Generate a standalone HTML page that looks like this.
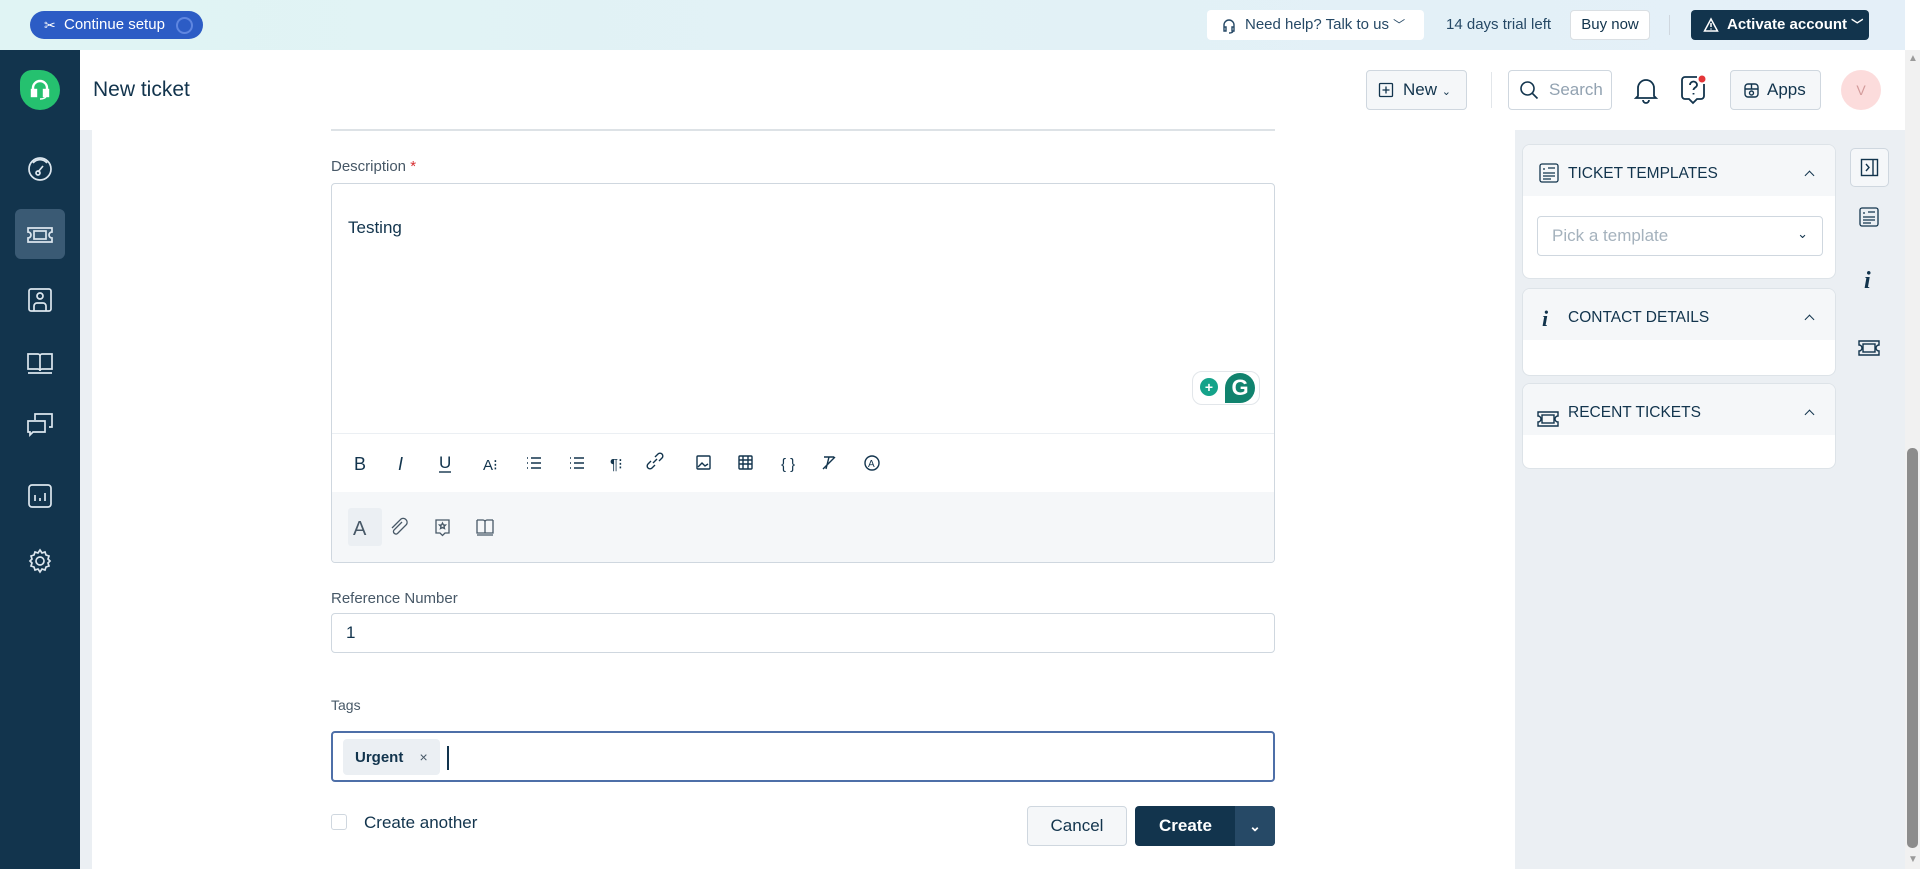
<!DOCTYPE html>
<html><head><meta charset="utf-8"><style>
*{box-sizing:border-box;margin:0;padding:0}
body{width:1920px;height:869px;overflow:hidden;font-family:"Liberation Sans",sans-serif;background:#fff;position:relative;color:#12344d}
.abs{position:absolute}
.top{left:0;top:0;width:1905px;height:50px;background:linear-gradient(90deg,#e0f4f4,#e4eff8)}
.cs{left:30px;top:11px;width:173px;height:28px;border-radius:14px;background:#2c5cc5;color:#fff;font-size:15px;line-height:28px;padding-left:34px}
.cs .ring{position:absolute;right:10px;top:6px;width:17px;height:17px;border-radius:50%;border:2.5px solid #5f86e0}
.help{left:1207px;top:10px;width:217px;height:30px;background:#fff;border-radius:4px;font-size:15px;line-height:30px;padding-left:38px;color:#264966}
.trial{left:1446px;top:10px;font-size:15px;line-height:30px;color:#264966}
.buy{left:1570px;top:10px;width:80px;height:30px;background:#fff;border:1px solid #dadfe3;border-radius:4px;font-size:15px;line-height:28px;text-align:center;color:#12344d}
.sep1{left:1669px;top:15px;width:1px;height:20px;background:#cfd7df}
.act{left:1691px;top:10px;width:178px;height:30px;background:#12344d;border-radius:4px;color:#fff;font-weight:bold;font-size:15px;line-height:30px;padding-left:36px}
.side{left:0;top:50px;width:80px;height:819px;background:#12344d}
.logo{left:20px;top:70px;width:40px;height:40px;border-radius:12px 20px 20px 20px;background:#25c16f}
.sideitem{left:15px;width:50px;height:50px;border-radius:6px}
.hdr{left:80px;top:50px;width:1825px;height:80px;background:#fff}
.title{left:93px;top:78px;font-size:21px;color:#12344d}
.btn{background:#f5f7f9;border:1px solid #cfd7df;border-radius:4px}
.gut{left:80px;top:130px;width:12px;height:739px;background:#ebeff3}
.rp{left:1515px;top:130px;width:390px;height:739px;background:#ebeff3}
.sb{left:1905px;top:50px;width:15px;height:819px;background:#f1f1f1}
.card{left:1522px;width:314px;background:#fff;border:1px solid #dde3e8;border-radius:8px;overflow:hidden}
.card .h{height:51px;background:#f5f7f9;font-size:15.5px;line-height:57px;padding-left:45px;position:relative;color:#12344d}
.card .h:after{content:"";position:absolute;right:22px;top:27px;width:6px;height:6px;border-left:1.5px solid #12344d;border-top:1.5px solid #12344d;transform:rotate(45deg)}
.lbl{left:331px;font-size:14px;color:#475867}
.box{left:331px;width:944px;border:1px solid #cfd7df;border-radius:4px;background:#fff}
.tb svg{position:absolute;top:452px}
</style></head><body>
<div class="abs top"></div>
<div class="abs cs"><span class="abs" style="left:14px;top:0;font-size:14px">✂</span>Continue setup<div class="ring"></div></div>
<div class="abs help"><svg class="abs" style="left:14px;top:8px" width="16" height="16" viewBox="0 0 16 16" fill="none" stroke="#264966" stroke-width="1.4"><path d="M3 10V7a5 5 0 0110 0v3M3 9h2v4H3zM11 9h2v4h-2zM12 13c0 1.5-2 2-4 2"/></svg>Need help? Talk to us <span style="font-size:12px">﹀</span></div>
<div class="abs trial">14 days trial left</div>
<div class="abs buy">Buy now</div>
<div class="abs sep1"></div>
<div class="abs act"><svg class="abs" style="left:12px;top:7px" width="16" height="16" viewBox="0 0 16 16" fill="none" stroke="#fff" stroke-width="1.5"><path d="M8 2L1.5 14h13zM8 6v4M8 11.5v1"/></svg>Activate account <span style="font-size:12px">﹀</span></div>

<div class="abs side"></div>
<div class="abs logo"><svg class="abs" style="left:10px;top:9px" width="20" height="22" viewBox="0 0 20 22" fill="none" stroke="#fff" stroke-width="2.4"><path d="M3 13V9a7 7 0 0114 0v4"/><rect x="2" y="11" width="4" height="6" fill="#fff"/><rect x="14" y="11" width="4" height="6" fill="#fff"/><path d="M16 17c0 2-3 3-6 3" stroke-width="1.5"/></svg></div>
<div class="abs sideitem" style="top:209px;background:#3a5a74"></div>
<svg class="abs" style="left:0;top:130px" width="80" height="460" viewBox="0 0 80 460" fill="none" stroke="#dce6ee" stroke-width="1.7">
<circle cx="40" cy="39" r="11"/><path d="M33 33a9 9 0 0114 0M38 42l5-6"/><circle cx="38" cy="43" r="2"/>
<path d="M28 98h24v4a3 3 0 000 6v4H28v-4a3 3 0 000-6z"/><rect x="34" y="101" width="12" height="8"/>
<rect x="29" y="159" width="22" height="22" rx="2"/><circle cx="40" cy="166" r="3"/><path d="M34 181v-5a3 3 0 013-3h6a3 3 0 013 3v5"/>
<path d="M28 224h10a2 2 0 012 2v15a2 2 0 00-2-2H28zM52 224H42a2 2 0 00-2 2v15a2 2 0 012-2h10z"/><path d="M28 243h24"/>
<path d="M35 290v-6h17v13h-3"/><path d="M28 291h17v11H33l-3 3v-3h-2z"/>
<rect x="29" y="355" width="22" height="22" rx="3"/><path d="M35 371v-6M40 371v-3M45 371v-8"/>
<circle cx="40" cy="431" r="4"/><path d="M40 420l2 3 3-1 1 3 3 1-1 3 2 2-2 2 1 3-3 1-1 3-3-1-2 3-2-3-3 1-1-3-3-1 1-3-2-2 2-2-1-3 3-1 1-3 3 1z"/>
</svg>

<div class="abs hdr"></div>
<div class="abs title">New ticket</div>
<div class="abs btn" style="left:1366px;top:70px;width:101px;height:40px;font-size:17px;line-height:38px;padding-left:36px;color:#12344d"><svg class="abs" style="left:11px;top:11px" width="16" height="16" viewBox="0 0 16 16" fill="none" stroke="#12344d" stroke-width="1.3"><rect x="1.5" y="1.5" width="13" height="13" rx="1"/><path d="M8 4.5v7M4.5 8h7"/></svg>New <span style="font-size:11px">⌄</span></div>
<div class="abs" style="left:1491px;top:72px;width:1px;height:36px;background:#e2e6ea"></div>
<div class="abs" style="left:1508px;top:70px;width:104px;height:40px;border:1px solid #cfd7df;border-radius:4px;font-size:17px;line-height:38px;padding-left:40px;color:#92a2b1"><svg class="abs" style="left:10px;top:9px" width="20" height="20" viewBox="0 0 20 20" fill="none" stroke="#12344d" stroke-width="1.6"><circle cx="8.5" cy="8.5" r="6.5"/><path d="M13.5 13.5l5 5"/></svg>Search</div>
<svg class="abs" style="left:1633px;top:75px" width="26" height="30" viewBox="0 0 26 30" fill="none" stroke="#12344d" stroke-width="1.8"><path d="M5 21V13a8 8 0 0116 0v8l2 2H3zM10 25a3 3 0 006 0"/></svg>
<svg class="abs" style="left:1679px;top:73px" width="30" height="32" viewBox="0 0 30 32" fill="none" stroke="#12344d" stroke-width="1.8"><path d="M18 4H6a3 3 0 00-3 3v16a3 3 0 003 3h4l4 4 4-4h4a3 3 0 003-3V11"/><path d="M11 12a3.5 3.5 0 117 0c0 2.5-3.5 2.5-3.5 5M14.5 20v1.5"/><circle cx="23" cy="6" r="3.5" fill="#e43538" stroke="none"/></svg>
<div class="abs btn" style="left:1730px;top:70px;width:91px;height:40px;font-size:17px;line-height:38px;padding-left:36px;color:#12344d"><svg class="abs" style="left:12px;top:11px" width="17" height="17" viewBox="0 0 17 17" fill="none" stroke="#12344d" stroke-width="1.4"><rect x="2" y="2" width="13" height="13" rx="3"/><path d="M2 7h13M8.5 2v5"/><circle cx="8.5" cy="11" r="2"/></svg>Apps</div>
<div class="abs" style="left:1841px;top:70px;width:40px;height:40px;border-radius:50%;background:#fcdcdc;color:#d39b9b;font-size:14px;line-height:40px;text-align:center">V</div>

<div class="abs gut"></div>
<div class="abs" style="left:331px;top:129px;width:944px;height:2px;background:#dde2e6"></div>

<div class="abs lbl" style="top:158px;font-size:15px">Description <span style="color:#d72d30">*</span></div>
<div class="abs box" style="top:183px;height:380px;overflow:hidden">
 <div class="abs" style="left:16px;top:34px;font-size:17px;color:#12344d">Testing</div>
 <div class="abs" style="left:0;top:249px;width:944px;height:1px;background:#ebeff3"></div>
 <div class="abs" style="left:0;top:308px;width:944px;height:72px;background:#f5f7f9"></div>
 <div class="abs" style="left:16px;top:324px;width:34px;height:38px;background:#ebeff3;border-radius:3px"></div>
 <div class="abs" style="left:860px;top:187px;width:68px;height:34px;border:1px solid #e2e6ea;border-radius:10px 10px 10px 10px;background:#fff"></div>
 <div class="abs" style="left:868px;top:194px;width:18px;height:18px;border-radius:50%;background:#15a38a;color:#fff;font-size:14px;line-height:18px;text-align:center;font-weight:bold">+</div>
 <div class="abs" style="left:893px;top:189px;width:30px;height:30px;border-radius:50% 50% 50% 0;background:#11836e;color:#fff;font-size:22px;line-height:30px;text-align:center;font-weight:bold">G</div>
</div>
<div class="tb">
<svg width="900" height="30" style="left:350px;top:448px" viewBox="0 0 900 30" fill="none" stroke="#12344d" stroke-width="1.4" font-family="Liberation Sans">
<text x="4" y="22" font-size="18" fill="#12344d" stroke="none">B</text>
<text x="48" y="22" font-size="18" font-style="italic" fill="#12344d" stroke="none">I</text>
<text x="89" y="20" font-size="17" fill="#12344d" stroke="none">U</text><path d="M89 24h12"/>
<text x="133" y="22" font-size="15" fill="#12344d" stroke="none">A⁝</text>
<path d="M181 10h10M181 15h10M181 20h10M177 10h1M177 15h1M177 20h1"/>
<path d="M224 10h10M224 15h10M224 20h10M220 10h1M220 15h1M220 20h1"/>
<text x="260" y="21" font-size="15" fill="#12344d" stroke="none">¶⁝</text>
<path d="M305 17l-3 3a2.5 2.5 0 01-4-4l3-3M309 13l3-3a2.5 2.5 0 00-4-4l-3 3M303 15l4-4"/>
<rect x="347" y="8" width="13" height="13" rx="1"/><path d="M348 19l4-4 3 3 3-2"/>
<rect x="389" y="8" width="13" height="13" rx="1"/><path d="M389 12h13M389 16h13M393 8v13M398 8v13"/>
<text x="431" y="21" font-size="15" fill="#12344d" stroke="none">{ }</text>
<path d="M474 9h10M479 9l-3 12M473 21l12-12"/>
<circle cx="522" cy="15" r="7"/><text x="518" y="19" font-size="10" fill="#12344d" stroke="none">A</text>
</svg>
<svg width="200" height="34" style="left:350px;top:510px" viewBox="0 0 200 34" fill="none" stroke="#475867" stroke-width="1.3" font-family="Liberation Sans">
<text x="3" y="25" font-size="20" fill="#475867" stroke="none">A</text>
<path d="M52 12l-8 8a2.5 2.5 0 003.5 3.5l9-9a4 4 0 00-5.5-5.5l-9 9"/>
<path d="M86 10h13v13h-4l-2.5 2.5L90 23h-4z"/><path d="M92.5 13l1 2h2l-1.5 1.5.5 2-2-1-2 1 .5-2-1.5-1.5h2z"/>
<path d="M127 10h6a2 2 0 012 2v11M143 10h-6a2 2 0 00-2 2M127 10v13h16V10M127 25h16"/>
</svg>
</div>

<div class="abs lbl" style="top:590px;font-size:15px">Reference Number</div>
<div class="abs box" style="top:613px;height:40px;font-size:17px;line-height:38px;padding-left:14px;color:#12344d">1</div>

<div class="abs lbl" style="top:697px;font-size:14px">Tags</div>
<div class="abs box" style="top:731px;height:51px;border:2px solid #4e6fa8"></div>
<div class="abs" style="left:343px;top:739px;width:97px;height:36px;background:#ebeff3;border-radius:4px;font-size:15px;line-height:36px;padding-left:12px;font-weight:bold;color:#12344d">Urgent <span style="font-weight:normal;font-size:14px;margin-left:12px;color:#475867">×</span></div>
<div class="abs" style="left:447px;top:746px;width:2px;height:24px;background:#12344d"></div>

<div class="abs" style="left:331px;top:814px;width:16px;height:16px;border:1px solid #cfd7df;border-radius:3px"></div>
<div class="abs" style="left:364px;top:813px;font-size:17px;color:#12344d">Create another</div>
<div class="abs btn" style="left:1027px;top:806px;width:100px;height:40px;font-size:17px;line-height:38px;text-align:center;color:#12344d">Cancel</div>
<div class="abs" style="left:1135px;top:806px;width:140px;height:40px;border-radius:4px;background:#12344d;color:#fff;font-size:17px;font-weight:bold;line-height:40px;padding-left:24px">Create</div>
<div class="abs" style="left:1235px;top:806px;width:40px;height:40px;border-radius:0 4px 4px 0;background:#264966;color:#fff;font-size:14px;line-height:40px;text-align:center;font-weight:bold">⌄</div>

<div class="abs rp"></div>
<div class="abs card" style="top:144px;height:135px"><div class="h">TICKET TEMPLATES</div>
 <div class="abs" style="left:14px;top:71px;width:286px;height:40px;border:1px solid #cfd7df;border-radius:4px;font-size:17px;line-height:38px;padding-left:14px;color:#a5b2bd">Pick a template<span class="abs" style="right:14px;top:-2px;color:#12344d;font-size:13px">⌄</span></div>
</div>
<div class="abs card" style="top:288px;height:88px"><div class="h">CONTACT DETAILS</div></div>
<div class="abs card" style="top:383px;height:86px"><div class="h">RECENT TICKETS</div></div>
<svg class="abs" style="left:1538px;top:162px" width="24" height="24" viewBox="0 0 24 24" fill="none" stroke="#12344d" stroke-width="1.3"><rect x="2" y="2" width="18" height="18" rx="2"/><path d="M5 7h2M5 11h12M5 14h12M5 17h8M10 6h7"/></svg>
<div class="abs" style="left:1542px;top:306px;font-family:'Liberation Serif',serif;font-style:italic;font-weight:bold;font-size:22px;color:#12344d">i</div>
<svg class="abs" style="left:1536px;top:408px" width="24" height="22" viewBox="0 0 24 22" fill="none" stroke="#12344d" stroke-width="1.4"><path d="M2 4h20v4a3 3 0 000 6v4H2v-4a3 3 0 000-6z"/><rect x="6" y="7" width="12" height="8"/></svg>
<div class="abs" style="left:1850px;top:148px;width:39px;height:39px;border:1px solid #cfd7df;border-radius:5px;background:#f5f7f9"></div>
<svg class="abs" style="left:1860px;top:158px" width="19" height="19" viewBox="0 0 19 19" fill="none" stroke="#12344d" stroke-width="1.4"><rect x="1.5" y="1.5" width="16" height="16"/><path d="M13 1.5v16M6 6l3 3.5-3 3.5"/></svg>
<svg class="abs" style="left:1858px;top:206px" width="22" height="22" viewBox="0 0 22 22" fill="none" stroke="#12344d" stroke-width="1.3"><rect x="2" y="2" width="18" height="18" rx="2"/><path d="M5 7h2M5 11h12M5 14h12M5 17h8M10 6h7"/></svg>
<div class="abs" style="left:1864px;top:268px;font-family:'Liberation Serif',serif;font-style:italic;font-weight:bold;font-size:24px;color:#12344d">i</div>
<svg class="abs" style="left:1857px;top:337px" width="24" height="22" viewBox="0 0 24 22" fill="none" stroke="#12344d" stroke-width="1.4"><path d="M2 4h20v4a3 3 0 000 6v4H2v-4a3 3 0 000-6z"/><rect x="6" y="7" width="12" height="8"/></svg>

<div class="abs sb"></div>
<div class="abs" style="left:1907px;top:448px;width:11px;height:400px;border-radius:5px;background:#8c8c8c"></div>
<div class="abs" style="left:1908px;top:53px;font-size:10px;color:#9a9a9a">▲</div>
<div class="abs" style="left:1908px;top:854px;font-size:10px;color:#9a9a9a">▼</div>
</body></html>
